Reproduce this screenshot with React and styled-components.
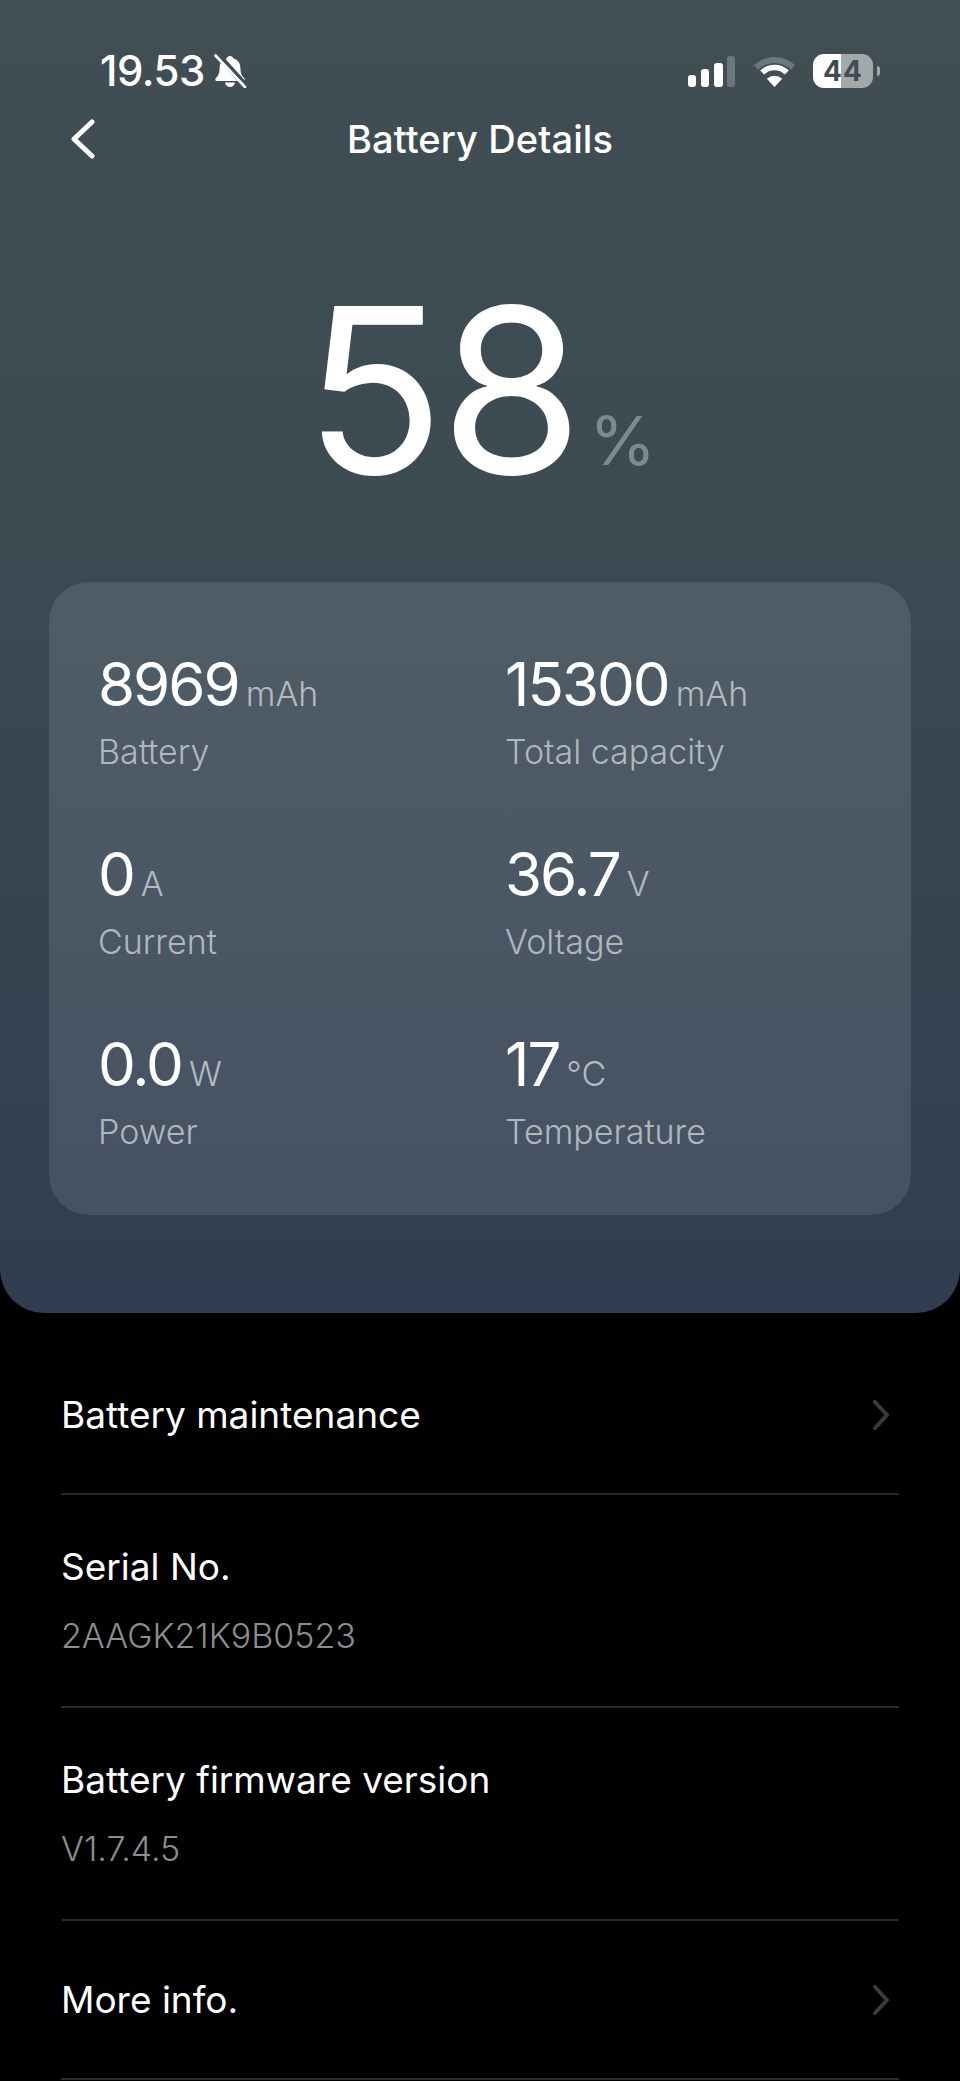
import React from 'react';
import styled, { createGlobalStyle } from 'styled-components';

const GlobalStyle = createGlobalStyle`
  html, body {
    margin: 0;
    background: #000;
    font-family: 'Inter', 'Liberation Sans', sans-serif;
    color: #fff;
  }
`;

const Page = styled.div`
  width: 960px;
  height: 2081px;
  overflow: hidden;
  background: #000;
`;

const Hero = styled.section`
  height: 1313px;
  box-sizing: border-box;
  padding-top: 54px;
  border-radius: 0 0 44px 44px;
  background: linear-gradient(180deg, #414e54 0%, #3c4a52 40%, #303d50 100%);
`;

const StatusBar = styled.div`
  display: flex;
  align-items: center;
  justify-content: space-between;
  height: 34px;
  padding: 0 80px 0 100px;
`;

const StatusGroup = styled.div`
  display: flex;
  align-items: center;
  gap: ${p => p.$gap}px;
`;

const Time = styled.span`
  font-size: 42px;
  font-weight: 500;
  line-height: 34px;
  letter-spacing: -0.5px;
`;

const BatteryPack = styled.div`
  display: flex;
  align-items: center;
  gap: 4px;
`;

const BatteryBody = styled.div`
  width: 60px;
  height: 34px;
  border-radius: 11px;
  background: linear-gradient(90deg, #fff 47%, #a3a9ab 47%);
  color: #3f4c52;
  font-size: 28px;
  font-weight: 700;
  line-height: 34px;
  text-align: center;
  letter-spacing: 1px;
`;

const BatteryNub = styled.div`
  width: 3px;
  height: 10px;
  border-radius: 0 3px 3px 0;
  background: #a3a9ab;
`;

const NavBar = styled.header`
  display: flex;
  align-items: center;
  height: 50px;
  margin-top: 26px;
  padding: 0 70px;
`;

const Title = styled.h1`
  flex: 1;
  margin: 0 25px 0 0;
  text-align: center;
  font-size: 38px;
  font-weight: 500;
  line-height: 50px;
  letter-spacing: 0.1px;
`;

const Charge = styled.div`
  display: flex;
  align-items: flex-start;
  justify-content: center;
  gap: 10px;
  margin-top: 111px;
  height: 307px;
`;

const ChargeValue = styled.span`
  font-size: 231px;
  font-weight: 400;
  line-height: 1;
  letter-spacing: -4px;
`;

const ChargeUnit = styled.span`
  margin-top: 131px;
  font-size: 68px;
  font-weight: 400;
  line-height: 1;
  color: #7f8a90;
`;

const Card = styled.div`
  display: grid;
  grid-template-columns: 407px 1fr;
  grid-auto-rows: 190px;
  margin: 0 49px;
  height: 633px;
  box-sizing: border-box;
  padding: 69px 0 0 49px;
  border-radius: 40px;
  background: linear-gradient(180deg, #505c65 0%, #465263 100%);
`;

const Stat = styled.div`
  display: flex;
  flex-direction: column;
`;

const StatValueRow = styled.div`
  display: flex;
  align-items: baseline;
  gap: 7px;
  height: 66px;
`;

const StatValue = styled.span`
  font-size: 60px;
  font-weight: 400;
  line-height: 66px;
  letter-spacing: -2px;
`;

const StatUnit = styled.span`
  font-size: 34px;
  font-weight: 300;
  color: #b4bbc0;
`;

const StatLabel = styled.span`
  margin-top: 15px;
  font-size: 34px;
  font-weight: 300;
  line-height: 40px;
  color: #b0b8bd;
`;

const List = styled.div`
  margin: 0 61px;
`;

const Row = styled.div`
  display: flex;
  align-items: center;
  justify-content: space-between;
  height: ${p => p.$height}px;
  box-sizing: border-box;
  padding-top: ${p => p.$top}px;
  border-bottom: 2px solid #2a2a2c;
`;

const RowText = styled.div`
  display: flex;
  flex-direction: column;
  gap: 25px;
`;

const RowTitle = styled.span`
  font-size: 37px;
  line-height: 44px;
  color: #fff;
`;

const RowSub = styled.span`
  font-size: 34px;
  font-weight: 300;
  line-height: 44px;
  color: #8d8d8d;
`;

const SignalIcon = () => (
  <svg width="48" height="31" viewBox="0 0 48 31">
    <rect x="0" y="19" width="8" height="12" rx="3" fill="#fff" />
    <rect x="13" y="13" width="8" height="18" rx="3" fill="#fff" />
    <rect x="26" y="7" width="9" height="24" rx="3" fill="#fff" />
    <rect x="39" y="0" width="8" height="31" rx="3" fill="#6b777c" />
  </svg>
);

const WifiIcon = () => (
  <svg width="41" height="32" viewBox="0 0 40 31">
    <path d="M2 12 A26 26 0 0 1 38 12" fill="none" stroke="#6b777c" strokeWidth="6" />
    <path d="M8 17 A17 17 0 0 1 32 17" fill="none" stroke="#fff" strokeWidth="5.5" />
    <path d="M20 31 L12.5 23 A11 11 0 0 1 27.5 23 Z" fill="#fff" />
  </svg>
);

const BellOffIcon = () => (
  <svg width="34" height="34" viewBox="0 0 34 34">
    <path d="M17 2c1.8 0 3 1 3.4 2.6 4.6 1.2 7 5 7 9.6 0 5 1.400 7.600 4 10.400 .8 1 .2 2.400 -1.200 2.400H3.800c-1.400 0 -2 -1.400 -1.200 -2.400 2.600 -2.800 4 -5.400 4 -10.400 0 -4.600 2.400 -8.400 7 -9.600C14 3 15.200 2 17 2z" fill="#fff" />
    <path d="M12 28.500h10c-.4 2.600 -2.400 4.500 -5 4.500s-4.600 -1.900 -5 -4.500z" fill="#fff" />
    <path d="M4 0 L31 30" stroke="#414e54" strokeWidth="6" />
    <path d="M2.500 1.500 L32 33" stroke="#fff" strokeWidth="2.600" strokeLinecap="round" />
  </svg>
);

const BackIcon = () => (
  <svg width="25" height="40" viewBox="0 0 25 40">
    <path d="M22 3 L4 20 L22 37" fill="none" stroke="#fff" strokeWidth="5" strokeLinecap="round" strokeLinejoin="round" />
  </svg>
);

const Chevron = styled.svg`
  width: 18px;
  height: 30px;
  margin-right: 9px;
`;

const ChevronIcon = () => (
  <Chevron viewBox="0 0 18 30">
    <path d="M3 2 L15 15 L3 28" fill="none" stroke="#3a3a3c" strokeWidth="4" strokeLinecap="round" strokeLinejoin="round" />
  </Chevron>
);

const stats = [
  { value: '8969', unit: 'mAh', label: 'Battery' },
  { value: '15300', unit: 'mAh', label: 'Total capacity' },
  { value: '0', unit: 'A', label: 'Current' },
  { value: '36.7', unit: 'V', label: 'Voltage' },
  { value: '0.0', unit: 'W', label: 'Power' },
  { value: '17', unit: '°C', label: 'Temperature' },
];

const App = () => {
  return (
    <Page>
      <GlobalStyle />
      <Hero>
        <StatusBar>
          <StatusGroup $gap={8}>
            <Time>19.53</Time>
            <BellOffIcon />
          </StatusGroup>
          <StatusGroup $gap={18}>
            <SignalIcon />
            <WifiIcon />
            <BatteryPack>
              <BatteryBody>44</BatteryBody>
              <BatteryNub />
            </BatteryPack>
          </StatusGroup>
        </StatusBar>
        <NavBar>
          <BackIcon />
          <Title>Battery Details</Title>
        </NavBar>
        <Charge>
          <ChargeValue>58</ChargeValue>
          <ChargeUnit>%</ChargeUnit>
        </Charge>
        <Card>
          {stats.map(s => (
            <Stat key={s.label}>
              <StatValueRow>
                <StatValue>{s.value}</StatValue>
                <StatUnit>{s.unit}</StatUnit>
              </StatValueRow>
              <StatLabel>{s.label}</StatLabel>
            </Stat>
          ))}
        </Card>
      </Hero>
      <List>
        <Row $height={182} $top={24}>
          <RowTitle>Battery maintenance</RowTitle>
          <ChevronIcon />
        </Row>
        <Row $height={213} $top={2}>
          <RowText>
            <RowTitle>Serial No.</RowTitle>
            <RowSub>2AAGK21K9B0523</RowSub>
          </RowText>
        </Row>
        <Row $height={213} $top={2}>
          <RowText>
            <RowTitle>Battery firmware version</RowTitle>
            <RowSub>V1.7.4.5</RowSub>
          </RowText>
        </Row>
        <Row $height={159} $top={0}>
          <RowTitle>More info.</RowTitle>
          <ChevronIcon />
        </Row>
      </List>
    </Page>
  );
};

export default App;
